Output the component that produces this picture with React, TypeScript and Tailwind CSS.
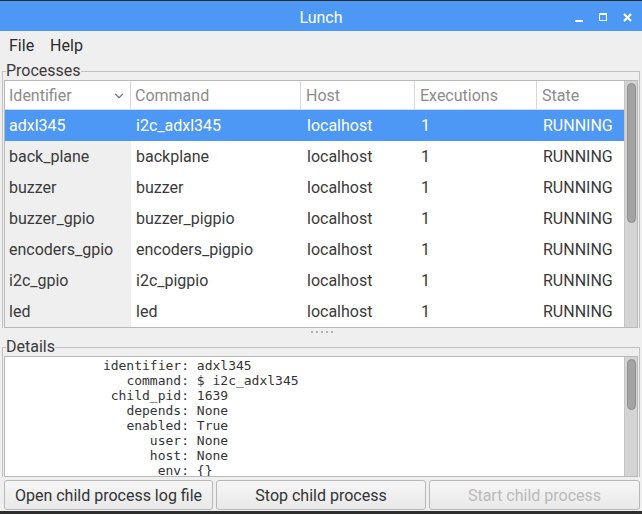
import { ChevronDown } from 'lucide-react'

const rows = [
  { id: 'adxl345', cmd: 'i2c_adxl345' },
  { id: 'back_plane', cmd: 'backplane' },
  { id: 'buzzer', cmd: 'buzzer' },
  { id: 'buzzer_gpio', cmd: 'buzzer_pigpio' },
  { id: 'encoders_gpio', cmd: 'encoders_pigpio' },
  { id: 'i2c_gpio', cmd: 'i2c_pigpio' },
  { id: 'led', cmd: 'led' },
]

const details: [string, string][] = [
  ['identifier', 'adxl345'],
  ['command', '$ i2c_adxl345'],
  ['child_pid', '1639'],
  ['depends', 'None'],
  ['enabled', 'True'],
  ['user', 'None'],
  ['host', 'None'],
  ['env', '{}'],
]

const cols = 'grid grid-cols-[126px_170px_114px_122px_1fr]'

function Scrollbar({ thumbTop, thumbHeight }: { thumbTop: number; thumbHeight: number }) {
  return (
    <div className="w-[13px] bg-[#d4d4d4] border-l border-[#c4c4c4] flex flex-col items-center">
      <div
        className="w-[9px] rounded-full bg-[#a3a3a3] border border-[#8f8f8f]"
        style={{ marginTop: thumbTop, height: thumbHeight }}
      />
    </div>
  )
}

export default function App() {
  return (
    <div className="w-[642px] h-[514px] bg-[#2e2e2e] pt-px font-['Roboto',sans-serif] text-[16px]">
      <div className="flex flex-col h-[510px] bg-[#efefef]">
        {/* Title bar */}
        <div className="relative h-[30px] bg-[#4d98f5] flex items-center justify-center text-white">
          <span className="leading-none pt-[3px]">Lunch</span>
          <div className="absolute right-[10px] top-0 h-full flex items-center gap-[16px] pt-[2px]">
            <div className="w-[8px] h-[8px] flex items-end">
              <div className="w-[8px] h-[2px] bg-white translate-y-[1px]" />
            </div>
            <div className="w-[8px] h-[8px] border border-t-2 border-white" />
            <svg width="9" height="9" viewBox="0 0 9 9">
              <path d="M1 1L8 8M8 1L1 8" stroke="white" strokeWidth="2.2" />
            </svg>
          </div>
        </div>

        {/* Menu */}
        <div className="h-[28px] flex items-center gap-[16px] pl-[9px] pt-[2px] text-[#2b2b2b]">
          <span>File</span>
          <span>Help</span>
        </div>

        {/* Processes */}
        <fieldset className="mt-[3px] mx-[2px] border border-b-0 border-[#c2c2c2] px-px">
          <legend className="ml-[2px] leading-[18px] text-[#3a3a3a]">Processes</legend>
          <div className="flex border border-[#b9b9b9] h-[248px]">
            <div className="flex-1 bg-white text-[#3a3a3a]">
              <div className={`${cols} h-[29px] border-b border-[#d8d8d8] text-[#8c8c8c]`}>
                <div className="flex items-center justify-between pl-[4px] pr-[4px] pt-px border-r border-[#d8d8d8]">
                  <span>Identifier</span>
                  <ChevronDown size={14} strokeWidth={2} className="text-[#7a7a7a]" />
                </div>
                <div className="flex items-center pl-[4px] pt-px border-r border-[#d8d8d8]">Command</div>
                <div className="flex items-center pl-[5px] pt-px border-r border-[#d8d8d8]">Host</div>
                <div className="flex items-center pl-[5px] pt-px border-r border-[#d8d8d8]">Executions</div>
                <div className="flex items-center pl-[5px] pt-px">State</div>
              </div>
              {rows.map((r, i) => {
                const sel = i === 0
                return (
                  <div
                    key={r.id}
                    className={`${cols} h-[31px] items-center ${sel ? 'bg-[#4d98f5] text-white' : ''}`}
                  >
                    <div className={`h-full flex items-center pl-[4px] ${sel ? '' : 'bg-[#efefef]'}`}>{r.id}</div>
                    <div className="pl-[5px]">{r.cmd}</div>
                    <div className="pl-[6px]">localhost</div>
                    <div className="pl-[6px]">1</div>
                    <div className="pl-[6px]">RUNNING</div>
                  </div>
                )
              })}
            </div>
            <Scrollbar thumbTop={2} thumbHeight={140} />
          </div>
        </fieldset>

        {/* Splitter handle */}
        <div className="h-[10px] flex justify-center items-start pt-[3px] gap-[3px] pl-[2px]">
          {[0, 1, 2, 3, 4].map((d) => (
            <div key={d} className="w-[2px] h-[2px] bg-[#b3b3b3]" />
          ))}
        </div>

        {/* Details */}
        <fieldset className="mx-[2px] border border-b-0 border-[#c2c2c2] px-px">
          <legend className="ml-[2px] leading-[18px] text-[#3a3a3a]">Details</legend>
          <div className="flex border border-[#b9b9b9] h-[121px]">
            <div className="flex-1 bg-white overflow-hidden pt-px font-['DejaVu_Sans_Mono',monospace] text-[13px] leading-[15px] text-[#333]">
              {details.map(([k, v]) => (
                <div key={k} className="flex whitespace-pre">
                  <span className="w-[184px] text-right">{k}:</span>
                  <span> {v}</span>
                </div>
              ))}
            </div>
            <Scrollbar thumbTop={2} thumbHeight={51} />
          </div>
        </fieldset>

        {/* Buttons */}
        <div className="mt-[3px] mx-[4px] flex gap-[3px] h-[30px] mr-[2px]">
          {[
            { label: 'Open child process log file', disabled: false, w: 'w-[209px]' },
            { label: 'Stop child process', disabled: false, w: 'w-[210px]' },
            { label: 'Start child process', disabled: true, w: 'flex-1' },
          ].map((b) => (
            <button
              key={b.label}
              className={`${b.w} rounded-[3px] border border-[#b8b8b8] bg-gradient-to-b from-[#f6f6f6] to-[#e9e9e9] pt-[2px] ${
                b.disabled ? 'text-[#bababa]' : 'text-[#333]'
              }`}
            >
              {b.label}
            </button>
          ))}
        </div>
      </div>
    </div>
  )
}
